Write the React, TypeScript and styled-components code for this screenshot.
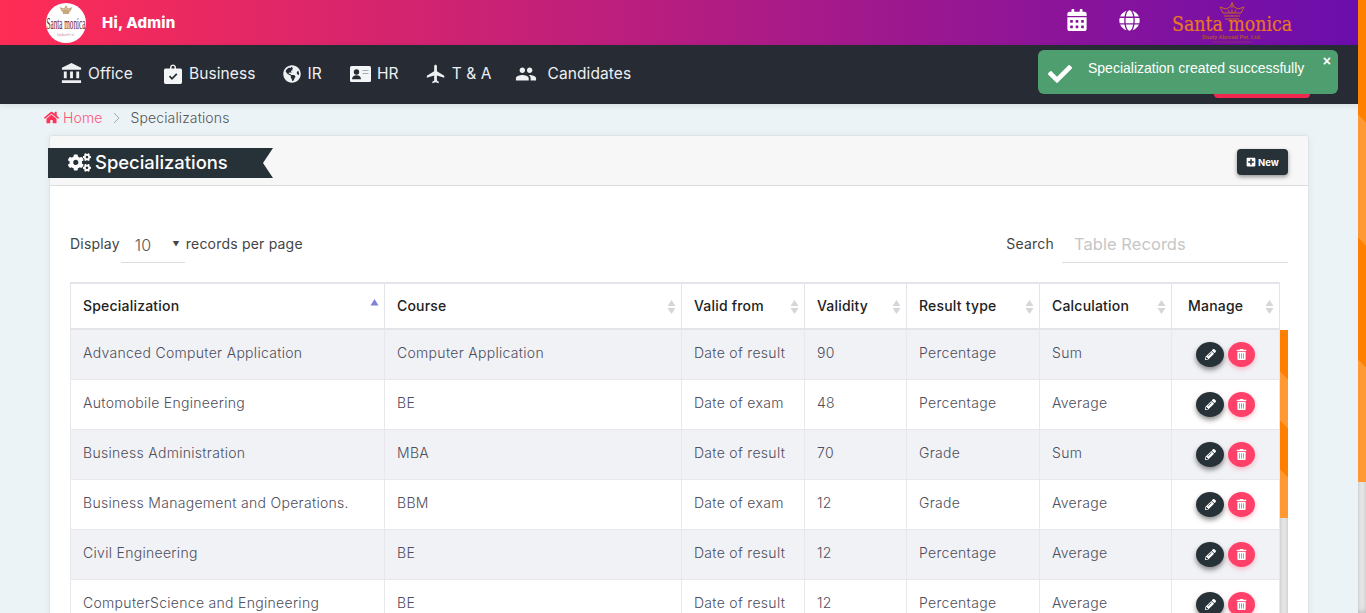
import React from "react";
import styled, { createGlobalStyle } from "styled-components";
import { FaHome, FaCogs, FaPlusSquare, FaPencilAlt, FaTrashAlt, FaCheck, FaCalendarAlt, FaGlobe, FaGlobeAmericas } from "react-icons/fa";
import { MdAccountBalance, MdFlight, MdPeople } from "react-icons/md";

const Global = createGlobalStyle`
  html { height: 100%; }
  body { margin: 0; background: #ecf3f7; font-family: Inter, "Liberation Sans", sans-serif; color: #555; }
  * { box-sizing: border-box; }
`;

const BarTrack = styled.div<{ $fixed?: boolean }>`
  position: ${p => p.$fixed ? "fixed" : "absolute"}; top: 0; right: 0; bottom: 0; width: 8px; z-index: 6;
  background-color: #f5f5f5; box-shadow: inset 0 0 6px rgba(0,0,0,.3);
`;
const BarThumb = styled.div<{ $h: number }>`
  width: 8px; height: ${p => p.$h}px; background-color: #ff7f00;
  background-image: linear-gradient(45deg, rgba(255,255,255,.2) 25%, transparent 25%, transparent 50%, rgba(255,255,255,.2) 50%, rgba(255,255,255,.2) 75%, transparent 75%, transparent);
`;

const Page = styled.div`height: 780px;`;
const TopBar = styled.header`
  height: 45px; display: flex; align-items: center; padding: 0 73px 0 46px;
  background: linear-gradient(90deg, #ff2d55 0%, #6a0dad 100%);
`;
const Avatar = styled.svg`width: 40px; height: 40px; display: block; flex: none;`;
const Greeting = styled.span`margin-left: 16px; color: #fff; font-weight: 800; font-size: 15px; letter-spacing: .2px; padding-bottom: 1px;`;
const TopRight = styled.div`margin-left: auto; display: flex; align-items: center; color: #fff;`;
const TopIcon = styled.span<{ $gap: number; $size: number }>`
  display: flex; font-size: ${p => p.$size}px; margin-right: ${p => p.$gap}px; padding-bottom: 5px;
`;
const BrandLogo = styled.svg`width: 122px; height: 45px; display: block;`;

const NavBar = styled.nav`
  height: 59px; background: #272b34; display: flex; align-items: center; padding: 0 56px 0 62px;
  box-shadow: 0 2px 6px rgba(0,0,0,.08); position: relative;
`;
const NavItem = styled.a<{ $gap: number; $w: number }>`
  display: flex; align-items: center; gap: ${p => p.$gap}px; margin-right: ${p => p.$w}px;
  color: #eef0f2; font-size: 15.5px; font-weight: 400; letter-spacing: .1px; line-height: 20px; white-space: nowrap; padding-bottom: 2px;
  svg { display: block; flex: none; }
`;
const OfficeIcon = styled(MdAccountBalance)`margin-left: -2px;`;
const NavAction = styled.button`
  margin-left: auto; align-self: flex-start; margin-top: 15px; width: 96px; height: 38px; border: 0; border-radius: 4px;
  background: #f0284f;
`;
const Toast = styled.div`
  position: fixed; left: 1038px; top: 50px; width: 300px; height: 44px; border-radius: 6px; background: #4f9e6f;
  color: #fff; font: 14px "Liberation Sans", Arial, sans-serif; display: flex; align-items: flex-start; padding: 10px 0 0 10px;
  z-index: 5;
`;
const ToastCheck = styled.span`display: flex; font-size: 24px; margin: 2px 16px 0 0;`;
const ToastClose = styled.span`position: absolute; right: 7px; top: 3px; font-size: 14px; font-weight: 700;`;

const Crumbs = styled.div`
  height: 31px; padding: 0 0 4px 44px; display: flex; align-items: center; font-size: 14px; letter-spacing: .12px; font-weight: 300; color: #555;
`;
const CrumbHome = styled.span`display: flex; align-items: center; gap: 4px; color: #ff5577; svg { color: #ff3357; font-size: 15px; }`;
const CrumbSep = styled.svg`width: 7px; height: 12px; margin: 0 10px 0 11px; display: block;`;

const Card = styled.section`
  margin-left: 49px; width: 1260px; background: #fff; border: 1px solid #dfe3e6; border-radius: 4px;
  box-shadow: 0 0 6px rgba(0,0,0,.06);
`;
const CardHead = styled.div`
  height: 50px; background: #f7f7f7; border-bottom: 1px solid #ddd; display: flex; align-items: flex-start;
  justify-content: space-between; padding: 12px 20px 0 0; border-radius: 4px 4px 0 0;
`;
const Ribbon = styled.h2`
  margin: 0 0 0 -2px; width: 225px; height: 30px; background: #263238; color: #fff; display: flex; align-items: center;
  font-size: 18.4px; font-weight: 500; padding: 0 0 2px 20px; gap: 4px;
  clip-path: polygon(0 0, 100% 0, 215px 50%, 100% 100%, 0 100%);
`;
const NewButton = styled.button`
  width: 51px; height: 26px; margin-top: 1px; background: #263238; color: #fff; border: 0; border-radius: 4px; font: 700 9.5px Inter, sans-serif;
  display: flex; align-items: center; justify-content: center; gap: 2px; box-shadow: 0 2px 4px rgba(0,0,0,.4);
  svg { font-size: 10px; }
`;
const CardBody = styled.div`padding: 40px 20px 23px;`;
const Controls = styled.div`
  display: flex; justify-content: space-between; align-items: flex-start; height: 56px;
  font-size: 14px; letter-spacing: .2px; font-weight: 400; color: #444;
`;
const ControlGroup = styled.div`display: flex; align-items: flex-start;`;
const Label = styled.span`line-height: 36px;`;
const SelectBox = styled.div`
  width: 64px; height: 37px; margin: 0 1px 0 1px; border-bottom: 1px solid #ddd; display: flex; justify-content: space-between; align-items: center;
  padding: 1px 4px 0 14px; font-size: 16px; font-weight: 300; color: #555;
`;
const Caret = styled.span`font-size: 7px; color: #444; padding-right: 1px;`;
const SearchBox = styled.div`
  width: 226px; height: 37px; margin-left: 8px; border-bottom: 1px solid #ddd; padding-left: 12px; line-height: 36px;
  font-size: 16.5px; letter-spacing: .05px; font-weight: 400; color: #c6c6c6;
`;
const Table = styled.table`width: 1209px; border-collapse: collapse; table-layout: fixed;`;
const BodyTable = styled(Table)`margin-top: -1px;`;
const HeadCell = styled.th<{ $center?: boolean }>`
  position: relative; height: 46px; padding: 0 12px 2px; text-align: left; font-size: 14px; letter-spacing: .2px; font-weight: 500; color: #222;
  border: 1px solid #e4e4ea; border-top: 2px solid #e4e4ea; border-bottom: 2px solid #e4e4ea; background: #fff;
  padding-left: ${p => p.$center ? 16 : 12}px;
`;
const SortIcon = styled.svg`position: absolute; right: 5px; top: 15px; width: 9px; height: 16px;`;
const Scroller = styled.div`position: relative; width: 1218px; height: 307px; overflow: hidden;`;
const Row = styled.tr<{ $odd: boolean }>`background: ${p => p.$odd ? "#f1f2f6" : "#fff"};`;
const Cell = styled.td`
  height: 50px; padding: 0 12px 3px; font-size: 14px; letter-spacing: .3px; font-weight: 300; color: #4e4e5c; border: 1px solid #e8e8ec; border-top: 0;
  white-space: nowrap;
`;
const Actions = styled.div`display: flex; justify-content: center; gap: 4px; margin-top: 4px;`;
const RoundBtn = styled.button<{ $kind: "edit" | "del" }>`
  width: ${p => p.$kind === "edit" ? 28 : 27}px; height: 25px; border: 0; border-radius: 50%; padding: 0; color: #fff; font-size: 11px;
  display: flex; align-items: center; justify-content: center;
  background: ${p => p.$kind === "edit" ? "#263238" : "#ff4069"};
  box-shadow: ${p => p.$kind === "edit" ? "0 3px 5px rgba(0,0,0,.45)" : "0 2px 5px rgba(255,64,105,.35)"};
`;

const cols = [314, 297, 123, 102, 133, 132, 108];
const heads = ["Specialization", "Course", "Valid from", "Validity", "Result type", "Calculation", "Manage"];
const rows = [
  ["Advanced Computer Application", "Computer Application", "Date of result", "90", "Percentage", "Sum"],
  ["Automobile Engineering", "BE", "Date of exam", "48", "Percentage", "Average"],
  ["Business Administration", "MBA", "Date of result", "70", "Grade", "Sum"],
  ["Business Management and Operations.", "BBM", "Date of exam", "12", "Grade", "Average"],
  ["Civil Engineering", "BE", "Date of result", "12", "Percentage", "Average"],
  ["ComputerScience and Engineering", "BE", "Date of result", "12", "Percentage", "Average"],
];

const Colgroup = () => <colgroup>{cols.map((w, i) => <col key={i} width={w} />)}</colgroup>;

const BagIcon = () => (
  <svg width="18" height="20" viewBox="0 0 18 20" fill="#f4f5f6">
    <path d="M6 4.500V3a3 3 0 0 1 3-2.600A3 3 0 0 1 12 3v1.500h4.200A1.600 1.600 0 0 1 18 6.100v12.200a1.600 1.600 0 0 1-1.800 1.600H1.800A1.600 1.600 0 0 1 0 18.300V6.100a1.600 1.600 0 0 1 1.800-1.600zM7.500 4.500h3V3.200a1.500 1.500 0 0 0-3 0z" fillRule="evenodd" />
    <path d="M5.500 12.200l2.500 2.600 4.800-5" fill="none" stroke="#272b34" strokeWidth="1.700" />
  </svg>
);
const CardIcon = () => (
  <svg width="21" height="16" viewBox="0 0 21 16">
    <rect width="21" height="16" rx="1.500" fill="#f4f5f6" />
    <circle cx="6.500" cy="6" r="2.700" fill="#272b34" />
    <path d="M2 13.200c0-2.800 2-4 4.500-4s4.500 1.200 4.500 4z" fill="#272b34" />
    <path d="M12.500 4.500h6M12.500 7.500h6" stroke="#a9acb1" strokeWidth="1.200" />
  </svg>
);

const Crown = ({ x, y, s, color, w = 1 }: { x: number; y: number; s: number; color: string; w?: number }) => (
  <g transform={`translate(${x} ${y}) scale(${s})`} fill="none" stroke={color} strokeWidth={w}>
    <path d="M2 5l6 2 4-2 2-4 2 4 4 2 6-2-3 6H5zM6 14h16M7 17h14M14 0v6" />
    <path d="M10 8l2 3M18 8l-2 3M14 7v4" />
  </g>
);

const nav: { label: string; icon: React.ReactNode; gap: number; mr: number }[] = [
  { label: "Office", icon: <OfficeIcon size={23} />, gap: 5, mr: 31 },
  { label: "Business", icon: <BagIcon />, gap: 7, mr: 27 },
  { label: "IR", icon: <FaGlobeAmericas size={18} />, gap: 7, mr: 28 },
  { label: "HR", icon: <CardIcon />, gap: 6, mr: 26 },
  { label: "T & A", icon: <MdFlight size={22} />, gap: 5, mr: 23 },
  { label: "Candidates", icon: <MdPeople size={22} />, gap: 11, mr: 0 },
];

function Sort({ active }: { active?: boolean }) {
  return (
    <SortIcon viewBox="0 0 9 16">
      {active
        ? <path d="M4.500 0L8.500 6.500H.500z" fill="#7f82d8" />
        : <path d="M4.500 1L8.500 7H.500zM4.500 15L8.500 9H.500z" fill="#d6d6d9" />}
    </SortIcon>
  );
}

export default function App() {
  return (
    <Page>
      <Global />
      <TopBar>
        <Avatar viewBox="0 0 40 40">
          <circle cx="20" cy="20" r="20" fill="#fff" />
          <Crown x={14} y={3} s={0.43} color="#c9a77c" w={3} />
          <text transform="translate(.5 26) scale(.45 1)" fontFamily="Liberation Serif, serif" fontSize="16" fill="#6c2237">Santa monica</text>
          <text transform="translate(11 33) scale(.5 1)" fontFamily="Liberation Sans, sans-serif" fontSize="3.500" fill="#c08a96">Study Abroad Pvt. Ltd.</text>
        </Avatar>
        <Greeting>Hi, Admin</Greeting>
        <TopRight>
          <TopIcon $gap={31} $size={22}><FaCalendarAlt /></TopIcon>
          <TopIcon $gap={31} $size={21}><FaGlobe /></TopIcon>
          <BrandLogo viewBox="0 0 122 45">
            <Crown x={47} y={2} s={1} color="#c8642a" />
            <text transform="translate(1 31) scale(.87 1)" fontFamily="DejaVu Serif, serif" fontSize="20" stroke="#e8791d" strokeWidth=".2" fill="#e8791d">Santa monica</text>
            <text x="31" y="39" fontFamily="Liberation Sans, sans-serif" fontWeight="700" fontSize="5.500" fill="#b2502f">Study Abroad Pvt. Ltd.</text>
            <path d="M41 42h40" stroke="#a8452f" strokeWidth=".5" />
          </BrandLogo>
        </TopRight>
      </TopBar>
      <NavBar>
        {nav.map(n => (
          <NavItem key={n.label} $gap={n.gap} $w={n.mr}>{n.icon}{n.label}</NavItem>
        ))}
        <NavAction aria-label="action" />
      </NavBar>
      <Toast>
        <ToastCheck><FaCheck /></ToastCheck>
        Specialization created successfully
        <ToastClose>×</ToastClose>
      </Toast>
      <Crumbs>
        <CrumbHome><FaHome />Home</CrumbHome>
        <CrumbSep viewBox="0 0 7 12"><path d="M1 1l5 5-5 5" fill="none" stroke="#aaa" strokeWidth="1" /></CrumbSep>
        Specializations
      </Crumbs>
      <Card>
        <CardHead>
          <Ribbon><FaCogs size={23} />Specializations</Ribbon>
          <NewButton><FaPlusSquare />New</NewButton>
        </CardHead>
        <CardBody>
          <Controls>
            <ControlGroup>
              <Label>Display</Label>
              <SelectBox>10<Caret>▼</Caret></SelectBox>
              <Label>records per page</Label>
            </ControlGroup>
            <ControlGroup>
              <Label>Search</Label>
              <SearchBox>Table Records</SearchBox>
            </ControlGroup>
          </Controls>
          <Table>
            <Colgroup />
            <thead>
              <tr>
                {heads.map((h, i) => (
                  <HeadCell key={h} $center={i === 6}>{h}<Sort active={i === 0} /></HeadCell>
                ))}
              </tr>
            </thead>
          </Table>
          <Scroller>
            <BodyTable>
              <Colgroup />
              <tbody>
                {rows.map((r, i) => (
                  <Row key={r[0]} $odd={i % 2 === 0}>
                    {r.map((c, j) => <Cell key={j}>{c}</Cell>)}
                    <Cell>
                      <Actions>
                        <RoundBtn $kind="edit" aria-label="edit"><FaPencilAlt /></RoundBtn>
                        <RoundBtn $kind="del" aria-label="delete"><FaTrashAlt /></RoundBtn>
                      </Actions>
                    </Cell>
                  </Row>
                ))}
              </tbody>
            </BodyTable>
            <BarTrack><BarThumb $h={188} /></BarTrack>
          </Scroller>
        </CardBody>
      </Card>
      <BarTrack $fixed><BarThumb $h={482} /></BarTrack>
    </Page>
  );
}
